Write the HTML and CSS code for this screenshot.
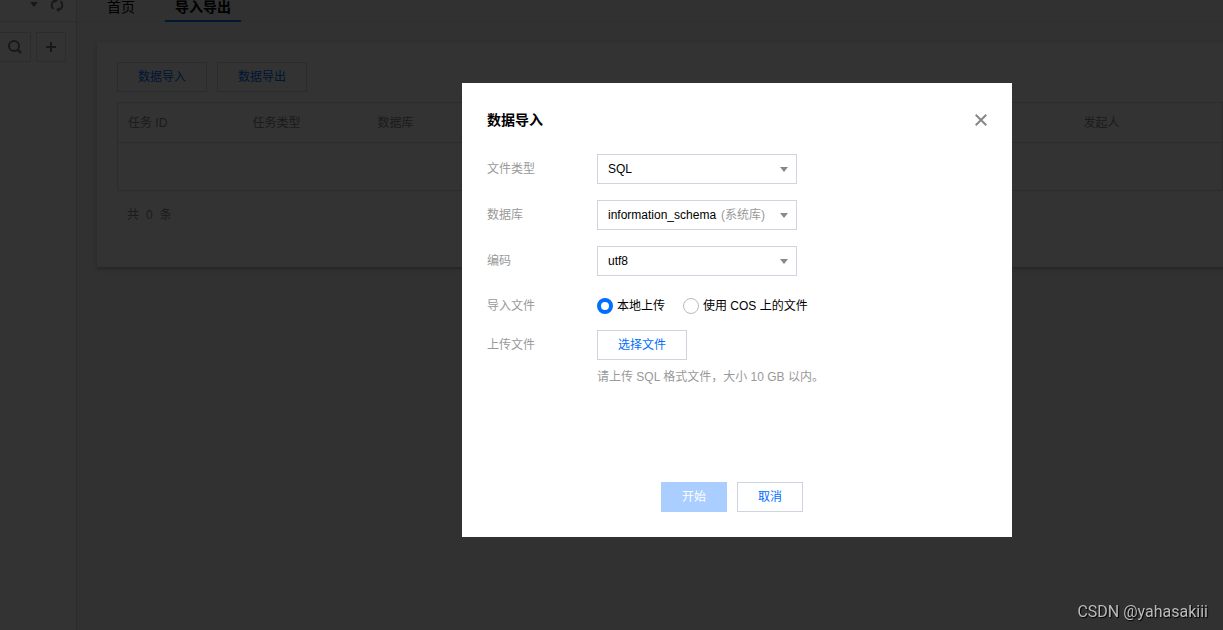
FILE: index.html
```html
<!DOCTYPE html>
<html lang="zh-CN">
<head>
<meta charset="utf-8">
<meta name="viewport" content="width=device-width, initial-scale=1">
<title>数据导入</title>
<link rel="stylesheet" href="styles.css">
</head>
<body>
<div class="app">
  <aside class="sidebar">
    <div class="sidebar-top">
      <svg class="caret" width="8" height="5" viewBox="0 0 8 5" aria-hidden="true"><path d="M0 0h8L4 5z"/></svg>
      <button class="icon-btn" type="button" aria-label="刷新">
        <svg width="14" height="16" viewBox="0 0 14 16" fill="none" stroke="currentColor" stroke-width="2"><path d="M3.500 12A5.200 5.200 0 0 1 5 3.200M10.500 4A5.200 5.200 0 0 1 9 12.800"/><path d="M5 .5v5.400l3-2.700zM9 10.100v5.400l-3-2.700z" fill="currentColor" stroke="none"/></svg>
      </button>
    </div>
    <div class="sidebar-tools">
      <button class="tool tool-search" type="button" aria-label="搜索">
        <svg width="16" height="16" viewBox="0 0 16 16" fill="none" stroke="currentColor" stroke-width="2"><circle cx="7" cy="7" r="5"/><path d="M10.500 10.500l3.500 3.500" stroke-width="2.500"/></svg>
      </button>
      <button class="tool" type="button" aria-label="新建">
        <svg width="10" height="10" viewBox="0 0 10 10" stroke="currentColor" stroke-width="2"><path d="M5 0v10M0 5h10"/></svg>
      </button>
    </div>
  </aside>
  <main class="main">
    <nav class="tabs">
      <a class="tab" href="#home">首页</a>
      <a class="tab tab-active" href="#transfer">导入导出</a>
    </nav>
    <section class="card">
      <div class="actions">
        <button class="btn" type="button">数据导入</button>
        <button class="btn" type="button">数据导出</button>
      </div>
      <table class="tasks">
        <colgroup><col class="col-s"><col class="col-s"><col><col class="col-user"></colgroup>
        <thead><tr><th>任务 ID</th><th>任务类型</th><th>数据库</th><th>发起人</th></tr></thead>
        <tbody><tr><td colspan="4"></td></tr></tbody>
      </table>
      <p class="total"><span>共</span><span>0</span><span>条</span></p>
    </section>
  </main>
</div>

<div class="overlay">
  <form class="dialog" role="dialog" aria-labelledby="dialog-title">
    <header class="dialog-head">
      <h2 class="dialog-title" id="dialog-title">数据导入</h2>
      <button class="close" type="button" aria-label="关闭">
        <svg width="12" height="12" viewBox="0 0 12 12" stroke="currentColor" stroke-width="2"><path d="M.7.700l10.600 10.600M11.300.700L.7 11.300"/></svg>
      </button>
    </header>
    <div class="field">
      <label class="label" for="type">文件类型</label>
      <div class="select">
        <select id="type"><option>SQL</option></select>
        <svg class="arrow" width="8" height="5" viewBox="0 0 8 5" aria-hidden="true"><path d="M0 0h8L4 5z"/></svg>
      </div>
    </div>
    <div class="field">
      <label class="label" for="db">数据库</label>
      <div class="select">
        <select id="db"><option>information_schema</option></select>
        <span class="suffix">(系统库)</span>
        <svg class="arrow" width="8" height="5" viewBox="0 0 8 5" aria-hidden="true"><path d="M0 0h8L4 5z"/></svg>
      </div>
    </div>
    <div class="field">
      <label class="label" for="enc">编码</label>
      <div class="select">
        <select id="enc"><option>utf8</option></select>
        <svg class="arrow" width="8" height="5" viewBox="0 0 8 5" aria-hidden="true"><path d="M0 0h8L4 5z"/></svg>
      </div>
    </div>
    <div class="field field-radio" role="radiogroup" aria-labelledby="source">
      <span class="label" id="source">导入文件</span>
      <label class="radio"><input type="radio" name="source" checked>本地上传</label>
      <label class="radio"><input type="radio" name="source">使用 COS 上的文件</label>
    </div>
    <div class="field field-upload">
      <label class="label" for="pick">上传文件</label>
      <button class="btn" id="pick" type="button">选择文件</button>
    </div>
    <p class="hint">请上传 SQL 格式文件，大小 10 GB 以内。</p>
    <footer class="dialog-foot">
      <button class="btn btn-primary" type="submit" disabled>开始</button>
      <button class="btn btn-small" type="button">取消</button>
    </footer>
  </form>
</div>
<div class="watermark">CSDN @yahasakiii</div>
</body>
</html>
```
FILE: styles.css
```css
* { box-sizing: border-box; }
body {
  margin: 0;
  overflow: hidden;
  background: #fff;
  color: #000;
  font: 12px/18px "Liberation Sans", "Noto Sans CJK SC", sans-serif;
}
h2, p { margin: 0; font-weight: 400; }
button, select { font: inherit; padding: 0; border-radius: 0; }
a { color: inherit; text-decoration: none; }
svg { display: block; }

.app { display: flex; min-height: 100vh; }
.sidebar { flex: none; width: 77px; border-right: 1px solid #ddd; color: #888; }
.sidebar-top {
  display: flex;
  justify-content: flex-end;
  align-items: flex-start;
  gap: 12px;
  height: 22px;
  padding-right: 12px;
  border-bottom: 1px solid #ddd;
}
.caret { margin-top: 2px; fill: #777; }
.icon-btn { border: 0; background: none; color: #777; margin-top: -3px; }
.sidebar-tools { display: flex; justify-content: flex-end; gap: 5px; padding: 10px 10px 0 0; }
.tool {
  display: flex;
  align-items: center;
  justify-content: center;
  width: 30px;
  height: 30px;
  border: 1px solid #ddd;
  background: none;
  color: #777;
}
.tool-search { width: 31px; border-left: 0; }

.main { flex: 1; min-width: 0; background: #f2f2f2; overflow: hidden; }
.tabs {
  display: flex;
  gap: 20px;
  height: 22px;
  padding-left: 20px;
  border-bottom: 1px solid #e8e8e8;
}
.tab { height: 22px; padding: 0 10px; font-size: 14px; line-height: 14px; }
.tab-active { font-weight: 700; border-bottom: 2px solid #006eff; }

.card {
  margin: 20px -20px 0 20px;
  padding: 20px 20px 43px;
  background: #fff;
  box-shadow: 0 2px 4px rgba(0, 0, 0, .25);
}
.actions { display: flex; gap: 10px; margin-bottom: 10px; }
.btn {
  width: 90px;
  height: 30px;
  border: 1px solid #cfd5de;
  background: #fff;
  color: #006eff;
}
.tasks {
  width: 100%;
  table-layout: fixed;
  border-collapse: collapse;
  border: 1px solid #ddd;
  color: #888;
}
.tasks th { height: 40px; padding: 0 10px; text-align: left; font-weight: 400; border-bottom: 1px solid #ddd; }
.tasks td { height: 48px; padding: 0; }
.col-s { width: 125px; }
.col-user { width: 149px; }
.total { display: flex; gap: 7px; margin-top: 15px; padding-left: 10px; color: #888; }

.overlay {
  position: fixed;
  inset: 0;
  display: flex;
  align-items: center;
  justify-content: center;
  padding: 0 0 10px 251px;
  background: rgba(0, 0, 0, .8);
}
.dialog { width: 550px; padding: 25px; background: #fff; }
.dialog-head {
  display: flex;
  align-items: center;
  justify-content: space-between;
  height: 24px;
  margin-bottom: 22px;
}
.dialog-title { font-size: 14px; font-weight: 700; }
.close { border: 0; background: none; color: #888; }
.field { display: flex; align-items: center; margin-bottom: 16px; }
.label { flex: none; width: 110px; color: #999; }
.select { display: grid; align-items: center; width: 200px; }
.select > * { grid-area: 1 / 1; }
.select select {
  appearance: none;
  width: 100%;
  height: 30px;
  padding: 0 10px;
  border: 1px solid #cfd5de;
  background: #fff;
  color: #000;
}
.suffix { justify-self: end; margin-right: 32px; color: #999; pointer-events: none; }
.arrow { justify-self: end; margin-right: 9px; fill: #888; pointer-events: none; }

.field-radio { height: 28px; margin-bottom: 10px; }
.radio { display: flex; align-items: center; gap: 4px; margin-right: 18px; }
.radio input {
  appearance: none;
  width: 16px;
  height: 16px;
  margin: 0;
  border: 1px solid #bbb;
  border-radius: 50%;
  background: #fff;
}
.radio input:checked { border: 4px solid #006eff; }
.field-upload { margin-bottom: 8px; }
.hint { margin-left: 110px; color: #999; }
.dialog-foot { display: flex; justify-content: center; gap: 10px; margin-top: 96px; padding-right: 10px; }
.btn-small { width: 66px; }
.btn-primary { width: 66px; border: 0; background: #a9ceff; color: #fff; }

.watermark {
  position: fixed;
  right: 15px;
  bottom: 9px;
  color: #bbb;
  font-family: Roboto, "Liberation Sans", sans-serif;
  font-size: 16px;
  text-shadow: 1px 1px 1px #000;
}
```
